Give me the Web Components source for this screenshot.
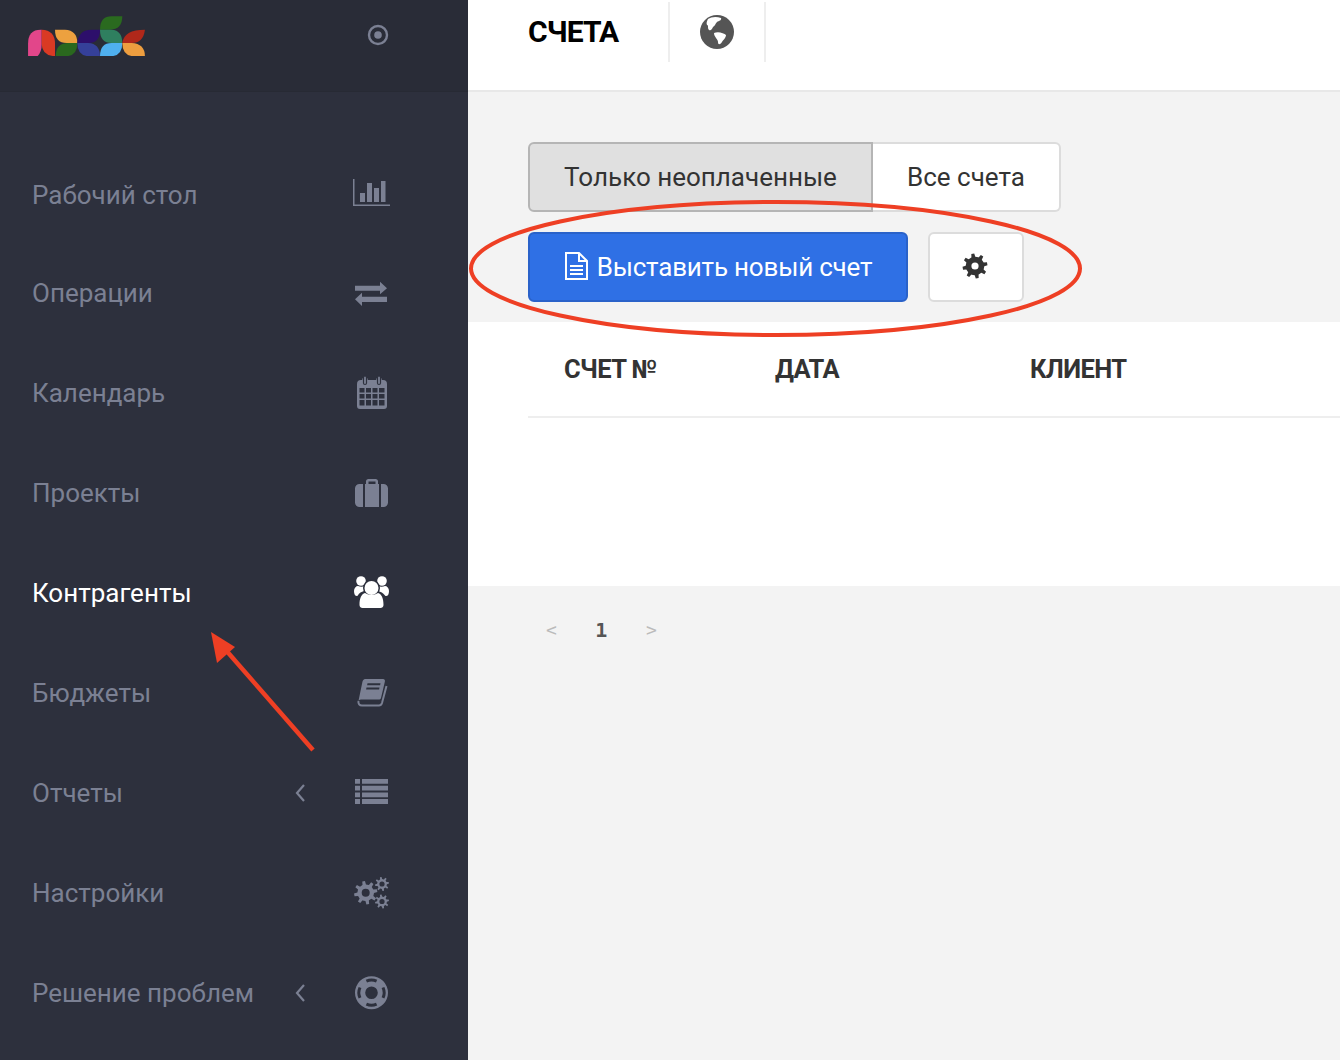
<!DOCTYPE html>
<html lang="ru"><head><meta charset="utf-8"><title>Счета</title>
<style>html,body{margin:0;padding:0;height:1060px;overflow:hidden;background:#f3f3f3}body{font-family:Roboto,"Open Sans",sans-serif}</style>
</head><body>
<x-app></x-app>
<script>
const F='font-family:Roboto,"Open Sans",sans-serif';
function gear(cx,cy,ro,ri,hole,n){let d='';const st=Math.PI*2/n;for(let i=0;i<n;i++){const a=i*st-st/2;const pts=[[ri,a],[ro,a+st*.12],[ro,a+st*.42],[ri,a+st*.54],[ri,a+st*.98]];
for(const [r,t] of pts){d+=(d?'L':'M')+(cx+r*Math.cos(t)).toFixed(2)+' '+(cy+r*Math.sin(t)).toFixed(2)}}
d+='Z';d+=`M${cx-hole} ${cy}a${hole} ${hole} 0 1 0 ${hole*2} 0a${hole} ${hole} 0 1 0 ${-hole*2} 0Z`;return d}
const I='#7b8093';
const icons={
bars:`<path fill="currentColor" d="M1 5h1.500v25.500H38V32H1zM8 19h5v9H8zM15 9h5v19h-5zM22 14h5v14h-5zM29 7h4.500v21H29z"/>`,
swap:`<path fill="currentColor" d="M3 12.700H28V8.700L35 15.200 28 21.300V17.700H3zM35 23.700H10V19.700L3 26.300 10 33V29H35z"/>`,
cal:`<path fill="currentColor" fill-rule="evenodd" d="M9 7h1.200a2.800 2.800 0 0 1 5.600 0h8.400a2.800 2.800 0 0 1 5.600 0H31a4 4 0 0 1 4 4v22a3 3 0 0 1-3 3H8a3 3 0 0 1-3-3V11a4 4 0 0 1 4-4zM7.500 15v4.500h5V15zm6.500 0v4.500h5V15zm6.500 0v4.500h5V15zm6.500 0v4.500h5.500V15zM7.500 21v4.500h5V21zm6.500 0v4.500h5V21zm6.500 0v4.500h5V21zm6.500 0v4.500h5.500V21zM7.500 27v5.500h5V27zm6.500 0v5.500h5V27zm6.500 0v5.500h5V27zm6.500 0v5.500h5.500V27z"/><path stroke="#2d303d" stroke-width="1.200" fill="currentColor" d="M11.500 4.500a1.500 1.500 0 0 1 3 0V10a1.500 1.500 0 0 1-3 0zM25.500 4.500a1.500 1.500 0 0 1 3 0V10a1.500 1.500 0 0 1-3 0z"/>`,
case:`<path fill="currentColor" fill-rule="evenodd" d="M14 11V8.500A2.500 2.500 0 0 1 16.500 6h7A2.500 2.500 0 0 1 26 8.500V11h1v23H13V11zm2.500 0h7V8.500h-7zM11 11v23H7.500A4.500 4.500 0 0 1 3 29.500v-14A4.500 4.500 0 0 1 7.500 11zM29 11h2.500a4.500 4.500 0 0 1 4.500 4.500v14a4.500 4.500 0 0 1-4.500 4.500H29z"/>`,
users:`<g fill="currentColor"><circle cx="9" cy="8" r="4.800"/><circle cx="30" cy="8" r="4.800"/><path d="M2 18c0-3 2-5 4-5 2 1 5 1 7 0 3 1 3 8 0 10H5c-2 0-3-2-3-5zM37 18c0-3-2-5-4-5-2 1-5 1-7 0-3 1-3 8 0 10h8c2 0 3-2 3-5z"/></g><circle cx="19.500" cy="15" r="8.500" fill="#2d303d"/><path fill="#2d303d" d="M5 36V24c2-5 7-7 14-7s12 2 15 7v12z"/><g fill="currentColor"><circle cx="19.500" cy="15" r="7"/><path d="M7.500 32c0-7 2-11 5.500-12 4 2.500 9 2.500 13 0 3.500 1 5.500 5 5.500 12 0 2-1.500 3-3 3H10.500c-1.500 0-3-1-3-3z"/></g>`,
book:`<path fill="currentColor" d="M13 6h18c1.500 0 2.200 1 1.900 2.500L29 25c-.4 1.200-1 1.500-2.500 1.500H10c-1.500 0-2.800.4-3.500 1.300L10.500 8.500C11 7 12 6 13 6z"/><path fill="#2d303d" d="M15.500 10.300h13l-.4 2h-13zM14.500 14.500h13l-.4 2h-13z"/><path fill="none" stroke="currentColor" stroke-width="2" d="M6.500 28c-.5 2.800 1 4.500 3.500 4.500h17c1.500 0 2.500-1 3-2.500L34.500 13"/>`,
list:`<path fill="currentColor" d="M3 6h5v4.800H3zM10 6h26v4.800H10zM3 12.700h5v4.800H3zM10 12.700h26v4.800H10zM3 19.400h5v4.800H3zM10 19.400h26v4.800H10zM3 26.100h5v4.800H3zM10 26.100h26v4.800H10z"/>`,
cogs:`<path fill="currentColor" fill-rule="evenodd" d="${gear(13.7,19.7,11.700,8.300,4,8)}"/><path fill="currentColor" fill-rule="evenodd" d="${gear(30,11,7,4.900,2.600,8)}"/><path fill="currentColor" fill-rule="evenodd" d="${gear(30,28.500,7,4.900,2.600,8)}"/>`,
buoy:`<path fill="currentColor" fill-rule="evenodd" d="M3 19.700a16.500 16.500 0 1 0 33 0a16.500 16.500 0 1 0-33 0zM13.200 19.700a6.300 6.300 0 1 1 12.600 0a6.300 6.300 0 1 1-12.600 0z"/><g fill="none" stroke="#2d303d" stroke-width="3"><path d="M14.400 8.200a12.500 12.500 0 0 1 10.200 0"/><path d="M14.400 31.200a12.500 12.500 0 0 0 10.200 0"/><path d="M8 14.500a12.500 12.500 0 0 0 0 10.400"/><path d="M31 14.500a12.500 12.500 0 0 1 0 10.400"/></g>`
};
function el(name,html){customElements.define(name,class extends HTMLElement{constructor(){super();this.attachShadow({mode:'open'}).innerHTML=html}})}

class NavItem extends HTMLElement{connectedCallback(){if(this.shadowRoot)return;const r=this.attachShadow({mode:'open'});
const active=this.hasAttribute('active'),chev=this.hasAttribute('chevron');
r.innerHTML=`<style>:host{display:flex;align-items:center;height:100px;padding-left:32px;padding-right:76px;font-size:26px;letter-spacing:0;color:${active?'#fff':I}}
.t{flex:1;white-space:nowrap;padding-top:var(--tp,0)}.c{width:12px;height:20px;margin-right:46px;display:${chev?'block':'none'}}
svg.i{width:40px;height:40px;flex:none}</style>
<span class="t"><slot></slot></span>
<svg class="c" viewBox="0 0 12 20"><path d="M10 2 3 10l7 8" fill="none" stroke="${I}" stroke-width="2.200"/></svg>
<svg class="i" viewBox="0 0 40 40" style="color:${active?'#fff':I}">${icons[this.getAttribute('icon')]}</svg>`}}
customElements.define('x-nav-item',NavItem);

el('x-logo',`<style>:host{display:block;width:117px;height:40.300px}svg{display:block}</style>
<svg width="117" height="40.300" viewBox="84 47 351 121">
<path fill="#e2468a" d="M84 168V130Q84 88 122 88H125V130Q125 155 112 168Z"/>
<path fill="#d93a24" d="M125 88Q165 90 165 130V168Q125 165 125 130Z"/>
<path fill="#eda13f" d="M165 88H195Q232 90 232 128H200Q165 128 165 88Z"/>
<path fill="#2a681e" d="M232 128Q232 168 195 168H167Q167 128 205 128Z"/>
<path fill="#2d0f6b" d="M232 128Q236 88 275 88H300Q300 128 265 128Z"/>
<path fill="#354099" d="M232 128H265Q300 130 300 168H270Q232 168 232 128Z"/>
<path fill="#2a6a1f" d="M300 88Q300 48 335 48H367Q367 88 330 88Z"/>
<path fill="#2f7f5f" d="M300 88H335Q367 90 367 128H335Q300 128 300 88Z"/>
<path fill="#4fb0ef" d="M367 128Q367 168 330 168H300Q300 128 335 128Z"/>
<path fill="#b0281a" d="M367 128Q372 88 435 88Q430 128 395 128Z"/>
<path fill="#ed9e3f" d="M367 128H395Q435 130 435 168H405Q367 168 367 128Z"/>
</svg>`);

el('x-sidebar',`<style>:host{display:block;width:468px;height:1060px;background:#2d303d;flex:none;${F}}
.head{background:#292c37;border-bottom:1px solid #272a34;display:flex;align-items:flex-start;padding-left:28px;justify-content:space-between;padding-right:79px;box-sizing:border-box;height:92px}
x-logo{margin-top:16px}.dot{margin-top:24px;display:block}
nav{display:flex;flex-direction:column;padding-top:53px}</style>
<div class="head"><x-logo></x-logo><svg class="dot" width="22" height="22" viewBox="0 0 22 22"><circle cx="11" cy="11" r="9" fill="none" stroke="#7b8093" stroke-width="2.400"/><circle cx="11" cy="11" r="3.800" fill="#7b8093"/></svg></div>
<nav><slot></slot></nav>`);

el('x-topbar',`<style>:host{display:flex;height:90px;background:#fff;border-bottom:2px solid #e8e8e8;padding-left:60px;align-items:flex-start;${F}}
.a{height:60px;margin-top:2px;display:flex;align-items:center;border-right:2px solid #eee}
h1{margin:0;font-size:30px;font-weight:700;color:#000;width:140px;letter-spacing:-.9px;line-height:62px;white-space:nowrap}
.g{width:94px;justify-content:center}.g svg{display:block}</style>
<div class="a"><h1><slot></slot></h1></div>
<div class="a g"><svg width="36" height="36" viewBox="0 0 36 36"><circle cx="18" cy="18" r="17" fill="#555"/><path fill="#fff" d="M9 5C12 3 17 2 22 4C23 6 20 7 18 8C16 10 16 12 14 13C13 15 12 17 10 16C8 14 10 11 8 11C7 9 8 7 9 5ZM15 19C19 17 25 19 27 21C27 24 24 26 23 28C21 31 19 31 19 28C19 25 15 23 15 19Z"/></svg></div>`);

el('x-toggle',`<style>:host{display:flex;width:533px;height:70px;font-size:26px;color:#333;box-sizing:border-box;${F}}
button{font:inherit;color:inherit;padding:0;box-sizing:border-box;height:70px}
.on{width:345px;background:#e0e0e0;border:2px solid #b5b5b5;border-radius:6px 0 0 6px}
.off{flex:1;background:#fff;border:2px solid #dcdcdc;border-left:0;border-radius:0 6px 6px 0}</style>
<button class="on">Только неоплаченные</button><button class="off">Все счета</button>`);

el('x-actions',`<style>:host{display:flex;gap:20px;height:70px;margin-top:20px;${F}}
button{box-sizing:border-box;height:70px;padding:0;font:inherit;display:flex;align-items:center;justify-content:center}
.p{width:380px;background:#2f70e5;border:2px solid #2a62c9;border-radius:6px;color:#fff;font-size:26px;letter-spacing:-.2px;gap:8px}
.p svg{margin-bottom:2px}
.s{width:96px;background:#fff;border:2px solid #dcdcdc;border-radius:6px}.s svg{margin:0 2px 2px 0}</style>
<button class="p"><svg width="25" height="28" viewBox="0 0 25 28"><path fill="none" stroke="#fff" stroke-width="2" d="M2 1h13l8 8v18H2z"/><path fill="#fff" d="M14 1h2v7h7v2h-9zM6 13h13v2H6zM6 17h13v2H6zM6 21h13v2H6z"/></svg><span>Выставить новый счет</span></button>
<button class="s"><svg width="26" height="26" viewBox="0 0 26 26"><path fill-rule="evenodd" fill="#333" d="${gear(13,13,12.500,9.300,3.600,8)}"/></svg></button>`);

el('x-table',`<style>:host{display:block;height:264px;background:#fff;padding-left:60px;box-sizing:border-box;${F}}
.r{display:flex;border-bottom:2px solid #eee;align-items:flex-start;font-size:25.5px;font-weight:700;color:#333;letter-spacing:-.6px;line-height:94px;padding-left:36px;box-sizing:border-box;height:96px}
.r span{white-space:nowrap}.a{width:211px}.b{width:255px}</style>
<div class="r"><span class="a">СЧЕТ №</span><span class="b">ДАТА</span><span>КЛИЕНТ</span></div>`);

el('x-pager',`<style>:host{display:flex;padding:31px 0 0 78px;align-items:center;height:26px;font-size:18px;color:#bbb;font-family:"DejaVu Sans Mono","Liberation Mono",monospace}
span{display:block;line-height:26px}.n{color:#555;font-weight:700;font-size:20px;margin:0 38.500px}</style>
<span>&lt;</span><span class="n">1</span><span>&gt;</span>`);

el('x-annot',`<style>:host{position:absolute;left:0;top:0;width:1340px;height:1060px;pointer-events:none;display:block}svg{display:block}</style>
<svg width="1340" height="1060"><ellipse cx="775.500" cy="268.500" rx="304.500" ry="66.500" fill="none" stroke="#ee3f24" stroke-width="4"/>
<path stroke="#ee3f24" stroke-width="4.500" d="M313 750 224 648"/><path fill="#ee3f24" d="M211 632 235 647 217 663z"/></svg>`);

el('x-main',`<style>:host{display:block;flex:1;min-width:0;height:1060px;background:#f3f3f3}
.tools{padding:50px 0 20px 60px}</style>
<slot name="top"></slot><div class="tools"><slot name="tools"></slot></div><slot name="table"></slot><slot name="pager"></slot>`);

el('x-app',`<style>:host{display:flex;width:1340px;height:1060px;position:relative;overflow:hidden}</style>
<x-sidebar>
<x-nav-item icon="bars" style="height:98px;--tp:2px">Рабочий стол</x-nav-item>
<x-nav-item icon="swap">Операции</x-nav-item>
<x-nav-item icon="cal">Календарь</x-nav-item>
<x-nav-item icon="case">Проекты</x-nav-item>
<x-nav-item icon="users" active>Контрагенты</x-nav-item>
<x-nav-item icon="book">Бюджеты</x-nav-item>
<x-nav-item icon="list" chevron>Отчеты</x-nav-item>
<x-nav-item icon="cogs">Настройки</x-nav-item>
<x-nav-item icon="buoy" chevron>Решение проблем</x-nav-item>
</x-sidebar>
<x-main>
<x-topbar slot="top">СЧЕТА</x-topbar>
<div slot="tools"><x-toggle></x-toggle><x-actions></x-actions></div>
<x-table slot="table"></x-table>
<x-pager slot="pager"></x-pager>
</x-main>
<x-annot></x-annot>`);
</script>
</body></html>
